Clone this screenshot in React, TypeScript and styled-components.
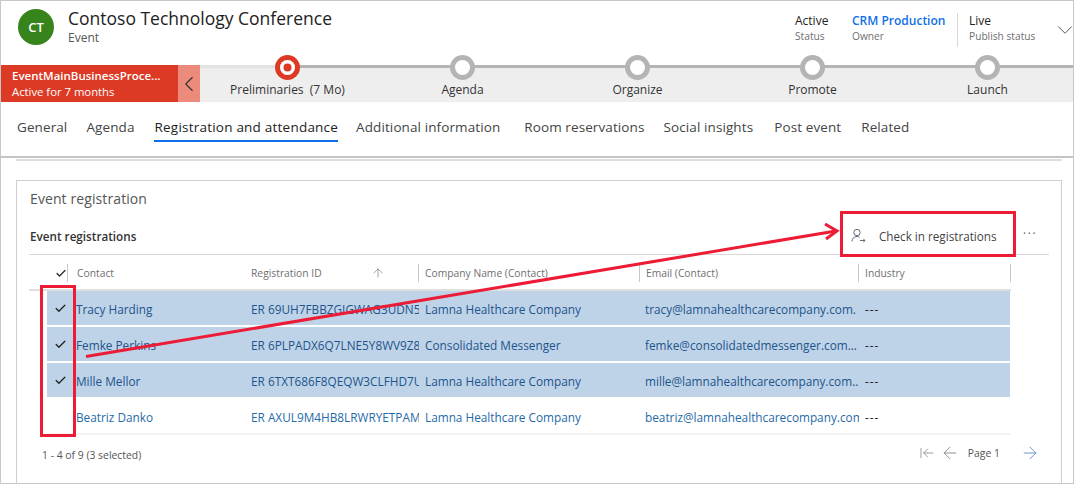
import React from "react";
import styled, { createGlobalStyle } from "styled-components";
import { ArrowLeft, ArrowLeftToLine, ArrowRight, ArrowUp, Check, ChevronDown, ChevronLeft } from "lucide-react";

const GlobalStyle = createGlobalStyle`
  html, body {
    margin: 0;
    padding: 0;
    background: #fff;
  }
  * {
    box-sizing: border-box;
  }
  body {
    font-family: "Open Sans", "Noto Sans", "Liberation Sans", sans-serif;
    color: #333;
  }
`;

const Frame = styled.div`
  position: relative;
  width: 1074px;
  height: 484px;
  border: 1px solid #c8c8c8;
  overflow: hidden;
  background: #fff;
`;

const Header = styled.header`
  display: flex;
  align-items: flex-start;
  height: 64px;
  padding: 8px 0 0 17px;
`;

const Avatar = styled.div`
  width: 36px;
  height: 36px;
  border-radius: 50%;
  background: #37841c;
  color: #fff;
  display: flex;
  align-items: center;
  justify-content: center;
  font-size: 13px;
  font-weight: 600;
`;

const TitleBlock = styled.div`
  margin-left: 14px;
  flex: 1;
`;

const Title = styled.div`
  font-size: 17.5px;
  line-height: 20px;
  margin-top: -1px;
  color: #222;
`;

const Subtitle = styled.div`
  font-size: 12px;
  line-height: 16px;
  margin-top: 2px;
  color: #555;
`;

const Summary = styled.div<{ $width: number; $divider?: boolean }>`
  flex: 0 0 ${(p) => p.$width}px;
  height: 34px;
  margin-top: 4px;
  padding-left: ${(p) => (p.$divider ? 11 : 0)}px;
  border-left: ${(p) => (p.$divider ? "1px solid #d8d8d8" : "none")};
`;

const SummaryValue = styled.div<{ $link?: boolean }>`
  font-size: 12px;
  line-height: 16px;
  font-weight: ${(p) => (p.$link ? 600 : 500)};
  color: ${(p) => (p.$link ? "#0f6fe8" : "#222")};
`;

const SummaryLabel = styled.div`
  font-size: 10.2px;
  line-height: 15px;
  color: #6f6f6f;
`;

const HeaderChevron = styled(ChevronDown)`
  flex: 0 0 26px;
  margin-top: 8px;
  margin-right: -5px;
  color: #555;
`;

const ProcessBar = styled.div`
  display: flex;
  height: 37px;
`;

const ActiveStage = styled.div`
  flex: 0 0 177px;
  background: #dc3a25;
  color: #fff;
  padding: 3px 0 0 11px;
`;

const ActiveName = styled.div`
  font-size: 11.5px;
  line-height: 16px;
  font-weight: 600;
`;

const ActiveTime = styled.div`
  font-size: 11.3px;
  line-height: 15px;
`;

const Collapse = styled.div`
  flex: 0 0 22px;
  min-width: 0;
  background: #ec8a7c;
  color: #333;
  display: flex;
  align-items: center;
  justify-content: center;

  svg {
    flex: none;
  }
`;

const Track = styled.div`
  position: relative;
  flex: 0 0 875px;
  display: flex;
  background: #eeeeee;
  border-top: 3px solid #b4b4b4;

  &::before {
    content: "";
    position: absolute;
    left: 0;
    top: -3px;
    width: 80px;
    height: 3px;
    background: #e2e2e2;
  }
`;

const Stage = styled.div`
  position: relative;
  flex: 0 0 175px;
  display: flex;
  flex-direction: column;
  align-items: center;
`;

const StageDot = styled.div<{ $active?: boolean }>`
  width: 25px;
  height: 25px;
  margin-top: -13px;
  border-radius: 50%;
  background: ${(p) => (p.$active ? "#dc3a25" : "#b4b4b4")};
  display: flex;
  align-items: center;
  justify-content: center;

  &::after {
    content: "";
    display: block;
    width: 15px;
    height: 15px;
    border-radius: 50%;
    background: #fff;
    box-shadow: ${(p) => (p.$active ? "inset 0 0 0 3.5px #fff, inset 0 0 0 8px #dc3a25" : "none")};
  }
`;

const StageLabel = styled.div`
  margin-top: 2px;
  font-size: 12px;
  line-height: 16px;
  color: #333;
  white-space: pre;
`;

const Tabs = styled.nav`
  display: flex;
  height: 56px;
  padding: 15px 0 0 16px;
  border-bottom: 2px solid #c4c4c4;
`;

const Tab = styled.div<{ $gap: number; $active?: boolean }>`
  margin-right: ${(p) => p.$gap}px;
  height: 25px;
  font-size: 13.5px;
  line-height: 20px;
  letter-spacing: ${(p) => (p.$active ? 0.22 : 0.1)}px;
  white-space: nowrap;
  color: ${(p) => (p.$active ? "#222" : "#444")};
  border-bottom: ${(p) => (p.$active ? "2px solid #0f6fe8" : "none")};
`;

const Body = styled.main`
  padding: 1px 11px 0 15px;
`;

const BodyRule = styled.div`
  height: 2px;
  margin-bottom: 19px;
  background: #dedede;
`;

const Card = styled.section`
  height: 320px;
  border: 1px solid #cfcfcf;
  padding: 0 12px;
`;

const CardTitle = styled.h2`
  margin: 0;
  padding: 8px 0 0 1px;
  height: 37px;
  font-size: 14px;
  line-height: 20px;
  letter-spacing: 0.1px;
  font-weight: 400;
  color: #555;
`;

const Toolbar = styled.div`
  display: flex;
  align-items: center;
  height: 37px;
  width: 1020px;
  border-bottom: 1px solid #d8d8d8;
  padding: 0 0 1px 1px;
`;

const SectionName = styled.div`
  flex: 1;
  font-size: 11.7px;
  font-weight: 600;
  color: #333;
`;

const CommandButton = styled.div`
  flex: 0 0 165px;
  display: flex;
  align-items: center;
  font-size: 11.7px;
  color: #444;
  white-space: nowrap;
`;

const CommandText = styled.span`
  margin-left: 13px;
`;

const MoreButton = styled.div`
  flex: 0 0 33px;
  margin-bottom: 4px;
  padding-left: 7px;
  font-size: 12px;
  letter-spacing: 1.6px;
  color: #666;
`;

const HeaderRow = styled.div`
  display: grid;
  grid-template-columns: 39px 177px 174px 221px 219px 152px;
  width: 982px;
  height: 36px;
  border-bottom: 2px solid #e0e0e0;
  padding-top: 9px;
`;

const HeaderCell = styled.div<{ $inset: number; $open?: boolean }>`
  display: flex;
  align-items: center;
  justify-content: space-between;
  height: 18px;
  padding-left: ${(p) => p.$inset}px;
  font-size: 10.3px;
  color: #707070;
  border-right: ${(p) => (p.$open ? "none" : "1px solid #c8c8c8")};
`;

const SortArrow = styled(ArrowUp)`
  margin-right: 33px;
  color: #666;
`;

const Rows = styled.div`
  width: 981px;
  padding-left: 18px;
`;

const Row = styled.div<{ $selected?: boolean }>`
  display: grid;
  grid-template-columns: 29px 175px 174px 220px 220px 145px;
  align-items: center;
  height: 34px;
  padding-top: 1px;
  background: ${(p) => (p.$selected ? "#bed3e7" : "#fff")};
  font-size: 11.8px;
  color: ${(p) => (p.$selected ? "#1d548c" : "#1f6aa8")};

  & + & {
    margin-top: 2px;
  }
`;

const CheckCell = styled.div`
  display: flex;
  justify-content: center;
  padding-right: 3px;
  color: #222;
`;

const Cell = styled.div`
  overflow: hidden;
  white-space: nowrap;
  margin-right: 6px;
`;

const EmptyValue = styled.div`
  color: #222;
  letter-spacing: 1px;
`;

const TableEnd = styled.div`
  width: 963px;
  margin-left: 18px;
  height: 2px;
  background: #f3f3f3;
`;

const Footer = styled.footer`
  display: flex;
  align-items: center;
  height: 40px;
  width: 1011px;
  padding-left: 13px;
  font-size: 10.4px;
  color: #555;
`;

const FooterCount = styled.div`
  flex: 1;
`;

const Pager = styled.div`
  display: flex;
  align-items: center;
  gap: 5px;
  margin-bottom: 4px;
  color: #888;
`;

const PageLabel = styled.span`
  margin: 0 15px 0 3px;
  color: #555;
`;

const NextIcon = styled(ArrowRight)`
  color: #5b8fc4;
`;

// red annotations that lie over the screenshot
const Callout = styled.div<{ $left: number; $top: number; $width: number; $height: number }>`
  position: absolute;
  left: ${(p) => p.$left}px;
  top: ${(p) => p.$top}px;
  width: ${(p) => p.$width}px;
  height: ${(p) => p.$height}px;
  border: 3px solid #ed1c36;
  pointer-events: none;
`;

const ArrowOverlay = styled.svg`
  position: absolute;
  left: 0;
  top: 0;
  pointer-events: none;
`;

const stages = [
  { name: "Preliminaries  (7 Mo)", active: true },
  { name: "Agenda" },
  { name: "Organize" },
  { name: "Promote" },
  { name: "Launch" },
];

const tabs = [
  { name: "General", gap: 19 },
  { name: "Agenda", gap: 20 },
  { name: "Registration and attendance", gap: 18, active: true },
  { name: "Additional information", gap: 24 },
  { name: "Room reservations", gap: 19 },
  { name: "Social insights", gap: 21 },
  { name: "Post event", gap: 20 },
  { name: "Related", gap: 0 },
];

const registrations = [
  { contact: "Tracy Harding", id: "ER 69UH7FBBZGIGWAG3UDN5", company: "Lamna Healthcare Company", email: "tracy@lamnahealthcarecompany.com.", selected: true },
  { contact: "Femke Perkins", id: "ER 6PLPADX6Q7LNE5Y8WV9Z8", company: "Consolidated Messenger", email: "femke@consolidatedmessenger.com...", selected: true },
  { contact: "Mille Mellor", id: "ER 6TXT686F8QEQW3CLFHD7U", company: "Lamna Healthcare Company", email: "mille@lamnahealthcarecompany.com..", selected: true },
  { contact: "Beatriz Danko", id: "ER AXUL9M4HB8LRWRYETPAM", company: "Lamna Healthcare Company", email: "beatriz@lamnahealthcarecompany.com", selected: false },
];

function CheckInIcon() {
  return (
    <svg width="15" height="15" viewBox="0 0 15 15" fill="none" stroke="#5f6b7a" strokeWidth="1">
      <circle cx="6" cy="4.5" r="3.2" />
      <path d="M1 13.5c0-3 2-5 5-5 1 0 1.8.2 2.5.6" />
      <path d="M9 12.5h5M12.3 10.8l1.7 1.7-1.7 1.7" />
    </svg>
  );
}

export default function App() {
  return (
    <>
      <GlobalStyle />
      <Frame>
        <Header>
          <Avatar>CT</Avatar>
          <TitleBlock>
            <Title>Contoso Technology Conference</Title>
            <Subtitle>Event</Subtitle>
          </TitleBlock>
          <Summary $width={57}>
            <SummaryValue>Active</SummaryValue>
            <SummaryLabel>Status</SummaryLabel>
          </Summary>
          <Summary $width={105}>
            <SummaryValue $link>CRM Production</SummaryValue>
            <SummaryLabel>Owner</SummaryLabel>
          </Summary>
          <Summary $width={95} $divider>
            <SummaryValue>Live</SummaryValue>
            <SummaryLabel>Publish status</SummaryLabel>
          </Summary>
          <HeaderChevron size={26} strokeWidth={0.9} />
        </Header>
        <ProcessBar>
          <ActiveStage>
            <ActiveName>EventMainBusinessProce...</ActiveName>
            <ActiveTime>Active for 7 months</ActiveTime>
          </ActiveStage>
          <Collapse>
            <ChevronLeft size={26} strokeWidth={1} />
          </Collapse>
          <Track>
            {stages.map((stage) => (
              <Stage key={stage.name}>
                <StageDot $active={stage.active} />
                <StageLabel>{stage.name}</StageLabel>
              </Stage>
            ))}
          </Track>
        </ProcessBar>
        <Tabs>
          {tabs.map((tab) => (
            <Tab key={tab.name} $gap={tab.gap} $active={tab.active}>
              {tab.name}
            </Tab>
          ))}
        </Tabs>
        <Body>
          <BodyRule />
          <Card>
            <CardTitle>Event registration</CardTitle>
            <Toolbar>
              <SectionName>Event registrations</SectionName>
              <CommandButton>
                <CheckInIcon />
                <CommandText>Check in registrations</CommandText>
              </CommandButton>
              <MoreButton>···</MoreButton>
            </Toolbar>
            <HeaderRow>
              <HeaderCell $inset={26}>
                <Check size={13} strokeWidth={2.4} color="#222" />
              </HeaderCell>
              <HeaderCell $inset={9} $open>Contact</HeaderCell>
              <HeaderCell $inset={6}>
                Registration ID
                <SortArrow size={14} strokeWidth={1} />
              </HeaderCell>
              <HeaderCell $inset={6}>Company Name (Contact)</HeaderCell>
              <HeaderCell $inset={6}>Email (Contact)</HeaderCell>
              <HeaderCell $inset={6}>Industry</HeaderCell>
            </HeaderRow>
            <Rows>
              {registrations.map((r) => (
                <Row key={r.contact} $selected={r.selected}>
                  <CheckCell>{r.selected && <Check size={13} strokeWidth={2.4} />}</CheckCell>
                  <Cell>{r.contact}</Cell>
                  <Cell>{r.id}</Cell>
                  <Cell>{r.company}</Cell>
                  <Cell>{r.email}</Cell>
                  <EmptyValue>---</EmptyValue>
                </Row>
              ))}
            </Rows>
            <TableEnd />
            <Footer>
              <FooterCount>1 - 4 of 9 (3 selected)</FooterCount>
              <Pager>
                <ArrowLeftToLine size={16} strokeWidth={1.2} />
                <ArrowLeft size={20} strokeWidth={1.1} />
                <PageLabel>Page 1</PageLabel>
                <NextIcon size={20} strokeWidth={1.1} />
              </Pager>
            </Footer>
          </Card>
        </Body>
        <Callout $left={39} $top={284} $width={36} $height={152} />
        <Callout $left={839} $top={210} $width={176} $height={46} />
        <ArrowOverlay width="1074" height="484" fill="none" stroke="#ed1c36" strokeWidth="3">
          <path d="M85 355.5L835 230" />
          <path d="M824 223L836 230L825 238" />
        </ArrowOverlay>
      </Frame>
    </>
  );
}
